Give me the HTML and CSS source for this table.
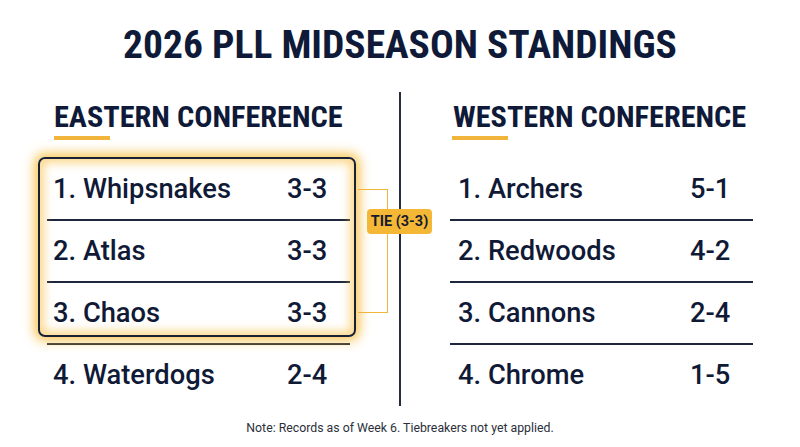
FILE: index.html
```html
<!DOCTYPE html>
<html lang="en">
<head>
    <meta charset="UTF-8">
    <meta name="viewport" content="width=device-width, initial-scale=1.0">
    <title>2026 PLL Midseason Standings</title>
    <link rel="stylesheet" href="styles.css">
</head>
<body>
    <h1 class="title">2026 PLL MIDSEASON STANDINGS</h1>

    <div class="board">
        <!-- Eastern -->
        <section class="conf conf-east">
            <h2 class="conf-name">EASTERN CONFERENCE</h2>
            <div class="conf-bar"></div>

            <div class="rows">
                <div class="tie-group">
                    <div class="row"><span class="team">1. Whipsnakes</span><span class="record">3-3</span></div>
                    <div class="row"><span class="team">2. Atlas</span><span class="record">3-3</span></div>
                    <div class="row"><span class="team">3. Chaos</span><span class="record">3-3</span></div>
                    <div class="tie-box"></div>
                    <div class="tie-bracket"></div>
                    <div class="tie-badge">TIE (3-3)</div>
                </div>
                <div class="row row-last"><span class="team">4. Waterdogs</span><span class="record">2-4</span></div>
            </div>
        </section>

        <div class="divider"></div>

        <!-- Western -->
        <section class="conf conf-west">
            <h2 class="conf-name">WESTERN CONFERENCE</h2>
            <div class="conf-bar"></div>

            <div class="rows">
                <div class="row"><span class="team">1. Archers</span><span class="record">5-1</span></div>
                <div class="row"><span class="team">2. Redwoods</span><span class="record">4-2</span></div>
                <div class="row"><span class="team">3. Cannons</span><span class="record">2-4</span></div>
                <div class="row row-last"><span class="team">4. Chrome</span><span class="record">1-5</span></div>
            </div>
        </section>
    </div>

    <p class="note">Note: Records as of Week 6. Tiebreakers not yet applied.</p>
</body>
</html>
```

FILE: styles.css
```css
body {
    margin: 0;
    width: 800px;
    height: 447px;
    overflow: hidden;
    background-color: #ffffff;
    color: #101a36;
    font-family: Roboto, "Liberation Sans", sans-serif;
}

.title {
    margin: 22px 0 0;
    font-family: "Roboto Condensed", Roboto, sans-serif;
    font-size: 39.5px;
    line-height: 46px;
    font-weight: 700;
    text-align: center;
    color: #0f1a38;
}

.board {
    display: grid;
    grid-template-columns: 303px 2px 303px;
    column-gap: 49px;
    padding: 0 47px;
    margin-top: 24px;
}

.divider {
    background-color: #252c40;
    height: 314px;
}

.conf-name {
    margin: 8px 0 0;
    font-family: "Roboto Condensed", Roboto, sans-serif;
    font-size: 30.3px;
    line-height: 34px;
    font-weight: 700;
    white-space: nowrap;
    color: #0f1a38;
}

.conf-east .conf-name {
    padding-left: 7px;
}

.conf-west .conf-name {
    padding-left: 3px;
}

.conf-bar {
    width: 56px;
    height: 4px;
    margin-top: 2px;
    background-color: #f1b53c;
}

.conf-east .conf-bar {
    margin-left: 7px;
}

.conf-west .conf-bar {
    margin-left: 2px;
}

.rows {
    margin-top: 19px;
}

.row {
    display: grid;
    grid-template-columns: 1fr 63px;
    height: 60px;
    line-height: 60px;
    border-bottom: 2px solid #1e273d;
    font-size: 27.3px;
    font-weight: 500;
    color: #101a36;
}

.row-last {
    border-bottom: none;
}

.conf-east .team {
    padding-left: 6px;
}

.conf-west .team {
    padding-left: 8px;
}

.tie-group {
    position: relative;
}

.tie-box {
    position: absolute;
    top: -2px;
    left: -9px;
    right: -6px;
    bottom: 8px;
    border: 2px solid #1a2033;
    border-radius: 7px;
    box-shadow: 0 0 11px 4px rgba(247, 184, 48, 0.78),
                inset 0 0 10px 4px rgba(247, 184, 48, 0.55);
    pointer-events: none;
}

.tie-bracket {
    position: absolute;
    top: 30px;
    left: 311px;
    width: 29px;
    height: 122px;
    border: 1.5px solid #f1b53c;
    border-left: none;
}

.tie-badge {
    position: absolute;
    z-index: 2;
    top: 50px;
    left: 320px;
    width: 65px;
    height: 25px;
    line-height: 25px;
    border-radius: 4px;
    background-color: #f5b836;
    color: #151a2c;
    font-size: 14.5px;
    font-weight: 700;
    text-align: center;
}

.note {
    margin: 14px 0 0;
    font-size: 12.3px;
    line-height: 16px;
    text-align: center;
    color: #2b2f3a;
}
```
